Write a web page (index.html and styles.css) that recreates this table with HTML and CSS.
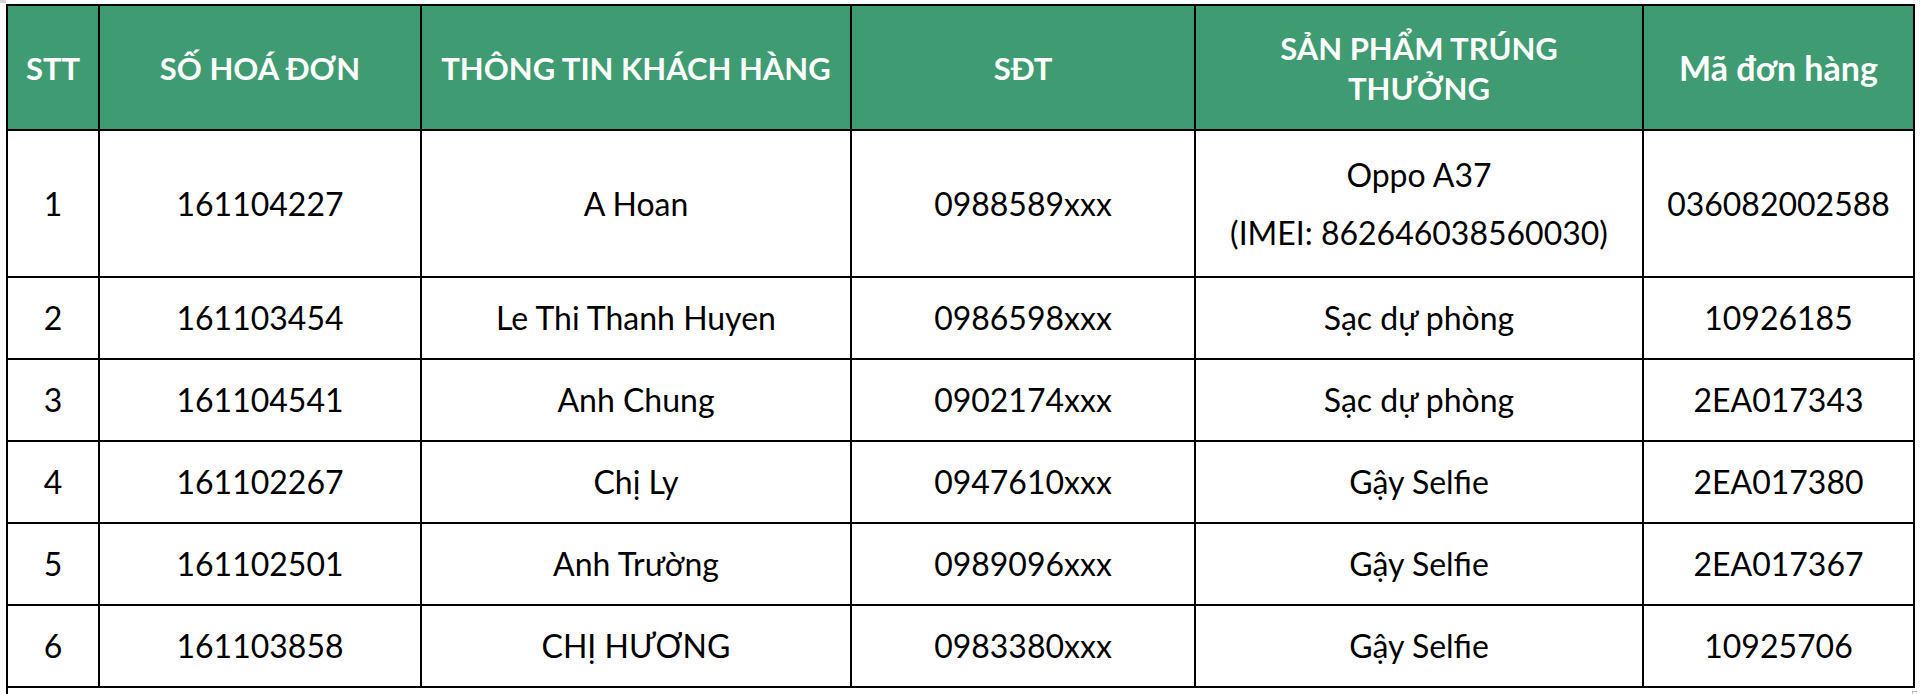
FILE: index.html
```html
<!DOCTYPE html>
<html lang="vi">
<head>
<meta charset="utf-8">
<title>Danh sách trúng thưởng</title>
<link rel="stylesheet" href="styles.css">
</head>
<body>
<div class="corner-mark"></div>
<table class="prize-table">
  <colgroup>
    <col class="c-stt">
    <col class="c-invoice">
    <col class="c-customer">
    <col class="c-phone">
    <col class="c-product">
    <col class="c-order">
  </colgroup>
  <thead>
    <tr>
      <th>STT</th>
      <th>SỐ HOÁ ĐƠN</th>
      <th>THÔNG TIN KHÁCH HÀNG</th>
      <th>SĐT</th>
      <th>SẢN PHẨM TRÚNG<br>THƯỞNG</th>
      <th class="th-mixed">Mã đơn hàng</th>
    </tr>
  </thead>
  <tbody>
    <tr class="row-tall">
      <td>1</td>
      <td>161104227</td>
      <td>A Hoan</td>
      <td>0988589xxx</td>
      <td class="multi">Oppo A37<br>(IMEI: 862646038560030)</td>
      <td>036082002588</td>
    </tr>
    <tr>
      <td>2</td>
      <td>161103454</td>
      <td>Le Thi Thanh Huyen</td>
      <td>0986598xxx</td>
      <td>Sạc dự phòng</td>
      <td>10926185</td>
    </tr>
    <tr>
      <td>3</td>
      <td>161104541</td>
      <td>Anh Chung</td>
      <td>0902174xxx</td>
      <td>Sạc dự phòng</td>
      <td>2EA017343</td>
    </tr>
    <tr>
      <td>4</td>
      <td>161102267</td>
      <td>Chị Ly</td>
      <td>0947610xxx</td>
      <td>Gậy Selfie</td>
      <td>2EA017380</td>
    </tr>
    <tr>
      <td>5</td>
      <td>161102501</td>
      <td>Anh Trường</td>
      <td>0989096xxx</td>
      <td>Gậy Selfie</td>
      <td>2EA017367</td>
    </tr>
    <tr>
      <td>6</td>
      <td>161103858</td>
      <td>CHỊ HƯƠNG</td>
      <td>0983380xxx</td>
      <td>Gậy Selfie</td>
      <td>10925706</td>
    </tr>
  </tbody>
</table>
<div class="tail"><span class="tail-line"></span><span class="tail-mark"></span></div>
</body>
</html>
```
FILE: styles.css
```css
html, body {
  margin: 0;
  padding: 0;
  background: #ffffff;
}
body {
  font-family: Lato, "Noto Sans", "DejaVu Sans", sans-serif;
  color: #000;
  width: 1920px;
  height: 694px;
  overflow: hidden;
  position: relative;
}
.corner-mark {
  position: absolute;
  left: 0;
  top: 0;
  width: 6px;
  height: 3px;
  background: #d4d4d4;
}
.prize-table {
  border-collapse: collapse;
  table-layout: fixed;
  width: 1907px;
  margin: 4px 0 0 6px;
}
.c-stt { width: 92px; }
.c-invoice { width: 322px; }
.c-customer { width: 430px; }
.c-phone { width: 344px; }
.c-product { width: 448px; }
.c-order { width: 271px; }

.prize-table th,
.prize-table td {
  border: 2px solid #000;
  text-align: center;
  vertical-align: middle;
  padding: 0;
  white-space: nowrap;
}
.prize-table th {
  background: #3f9b72;
  color: #ffffff;
  font-weight: 700;
  font-size: 31px;
  line-height: 40px;
  height: 123px;
}
.prize-table th.th-mixed {
  font-size: 34px;
}
.prize-table td {
  font-size: 32px;
  font-weight: 400;
  height: 80px;
  line-height: 36px;
}
.prize-table .row-tall td {
  height: 145px;
}
.prize-table td.multi {
  line-height: 58px;
}
.tail {
  display: flex;
  justify-content: space-between;
  margin-left: 6px;
  width: 1911px;
  height: 8px;
}
.tail-line {
  width: 2px;
  height: 8px;
  background: #000;
}
.tail-mark {
  width: 4px;
  height: 4px;
  margin-top: 3px;
  border-left: 1px solid #bbb;
  border-top: 1px solid #bbb;
}
```
